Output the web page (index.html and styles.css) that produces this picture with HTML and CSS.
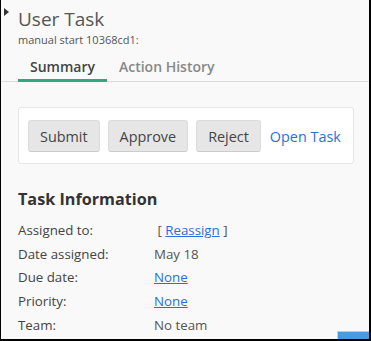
FILE: index.html
```html
<!DOCTYPE html>
<html>
<head>
  <title>User Task</title>
  <meta name="viewport" content="width=device-width, initial-scale=1.0">
  <link rel="stylesheet" href="styles.css">
</head>
<body>
  <div class="panel">
    <span class="collapse-arrow"></span>
    <div class="header">
      <div class="title">User Task</div>
      <div class="subtitle">manual start 10368cd1:</div>
    </div>
    <div class="tabs">
      <div class="tab active">Summary</div>
      <div class="tab">Action History</div>
    </div>
    <div class="content">
      <div class="actions">
        <button type="button">Submit</button>
        <button type="button">Approve</button>
        <button type="button">Reject</button>
        <a href="#" class="open-task">Open Task</a>
      </div>
      <h2>Task Information</h2>
      <div class="info">
        <div class="label">Assigned to:</div>
        <div class="value">&nbsp;[ <a href="#">Reassign</a> ]</div>
        <div class="label">Date assigned:</div>
        <div class="value">May 18</div>
        <div class="label">Due date:</div>
        <div class="value"><a href="#">None</a></div>
        <div class="label">Priority:</div>
        <div class="value"><a href="#">None</a></div>
        <div class="label">Team:</div>
        <div class="value">No team</div>
      </div>
    </div>
    <div class="corner-btn"></div>
  </div>
</body>
</html>
```
FILE: styles.css
```css
html, body {
  margin: 0;
  padding: 0;
  background: #fff;
  font-family: "Open Sans", Arial, sans-serif;
  color: #444;
}
.panel {
  position: relative;
  width: 371px;
  height: 341px;
  box-sizing: border-box;
  background: #f9f9f9;
  border-left: 1px solid #000;
  border-right: 2px solid #000;
  border-bottom: 2px solid #000;
  overflow: hidden;
}
.collapse-arrow {
  position: absolute;
  left: 3px;
  top: 8px;
  width: 0;
  height: 0;
  border-top: 4px solid transparent;
  border-bottom: 4px solid transparent;
  border-left: 5px solid #333;
}
.header {
  padding: 8px 17px 0;
}
.title {
  font-size: 19px;
  line-height: 22px;
  color: #555;
}
.subtitle {
  margin-top: 1px;
  font-size: 11px;
  line-height: 18px;
  color: #555;
}
.tabs {
  display: flex;
  padding: 0 17px;
  margin-top: 6px;
  border-bottom: 1px solid #ddd;
}
.tab {
  font-size: 14px;
  font-weight: 600;
  line-height: 20px;
  padding: 2px 12px 2px;
  margin-bottom: -1px;
  color: #888;
  border-bottom: 3px solid transparent;
}
.tab.active {
  color: #444;
  border-bottom-color: #2fa882;
}
.content {
  padding: 25px 15px 0 17px;
}
.actions {
  display: flex;
  align-items: center;
  gap: 8px;
  background: #fff;
  border: 1px solid #e6e6e6;
  border-radius: 3px;
  padding: 12px 9px 11px;
}
.actions button {
  font-family: inherit;
  font-size: 14.4px;
  color: #444;
  background: #e6e6e6;
  border: 1px solid #ddd;
  border-bottom-color: #ccc;
  border-radius: 3px;
  height: 32px;
  padding: 0 11px;
}
.open-task {
  margin-left: 1px;
  font-size: 14.4px;
  color: #2b6fd6;
  text-decoration: none;
}
h2 {
  margin: 24px 0 9px;
  font-size: 16.2px;
  font-weight: 700;
  color: #333;
}
.info {
  display: grid;
  grid-template-columns: 136px 1fr;
  font-size: 13.3px;
  line-height: 23.7px;
  color: #444;
}
.info .value {
  color: #555;
}
.info a {
  color: #2b6fd6;
}
.corner-btn {
  position: absolute;
  left: 336px;
  top: 331px;
  width: 40px;
  height: 12px;
  background: #4a9ade;
  border-top: 1px solid #d9c9b8;
  border-left: 1px solid #d9c9b8;
}
```
